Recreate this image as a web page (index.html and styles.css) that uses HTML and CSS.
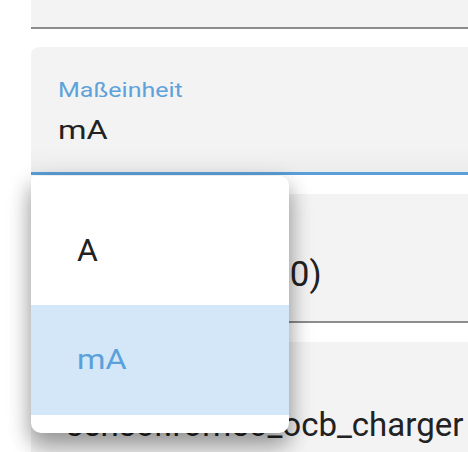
FILE: index.html
```html
<!DOCTYPE html>
<html lang="de">
<head>
<meta charset="utf-8">
<title>Maßeinheit</title>
<link rel="stylesheet" href="styles.css">
</head>
<body>
<div class="page">
  <div class="field field-top"></div>

  <div class="select-wrap">
    <div class="field field-focused">
      <div class="label"><span class="wide">Maßeinheit</span></div>
      <div class="value value-sel"><span class="wider">mA</span></div>
    </div>
    <ul class="menu">
      <li class="item">A</li>
      <li class="item item-selected"><span class="wide-item">mA</span></li>
    </ul>
  </div>

  <div class="field field-plain">
    <div class="value value-big">Standard (1.000)</div>
  </div>

  <div class="field field-plain field-last">
    <div class="value value-entity">sensor.romeo_ocb_charger</div>
  </div>
</div>
</body>
</html>
```

FILE: styles.css
```css
* { box-sizing: border-box; }

html, body {
  margin: 0;
  padding: 0;
  background: #ffffff;
  overflow: hidden;
}

body {
  font-family: Roboto, "Noto Sans", "Liberation Sans", sans-serif;
  color: #212121;
  width: 468px;
  height: 452px;
}

.page {
  width: 468px;
  padding-left: 31px;
  display: flex;
  flex-direction: column;
}

.field {
  background: #f3f3f3;
  padding-left: 27px;
  overflow: hidden;
  white-space: nowrap;
}

.field-top {
  height: 29px;
  border-bottom: 2px solid #8c8c8c;
}

.select-wrap {
  position: relative;
  margin-top: 18px;
}

.field-focused {
  height: 128px;
  border-radius: 8px 0 0 0;
  border-bottom: 3px solid #5b9fd8;
  padding-top: 31px;
  background: linear-gradient(#f3f3f3 80%, #ececec);
}

.label {
  font-size: 20px;
  line-height: 24px;
  color: #5da2db;
}

.wide, .wider, .wide-item {
  display: inline-block;
  transform-origin: 0 50%;
}
.wide { transform: scaleX(1.25); }
.wider { transform: scaleX(1.3); }
.wide-item { transform: scaleX(1.2); }

.value-sel {
  margin-top: 14px;
  font-size: 25px;
  line-height: 30px;
  color: #222222;
}

.field-plain {
  margin-top: 19px;
  height: 129px;
  border-radius: 8px 0 0 0;
  border-bottom: 2px solid #8c8c8c;
  padding-top: 61px;
}

.field-last {
  height: 110px;
  border-bottom: none;
  padding-top: 64px;
}

.value-big {
  font-size: 35px;
  line-height: 40px;
  letter-spacing: 0.15px;
  color: #222222;
}

.value-entity {
  margin-left: 8px;
  font-size: 33px;
  line-height: 38px;
  color: #222222;
}

.menu {
  position: absolute;
  top: 100%;
  left: 0;
  margin: 1px 0 0 0;
  width: 258px;
  height: 257px;
  padding: 19px 0 18px 0;
  list-style: none;
  background: #ffffff;
  border-radius: 4px 9px 10px 10px;
  box-shadow: 0 10px 20px rgba(0,0,0,0.22), 0 6px 28px rgba(0,0,0,0.12), 0 16px 24px rgba(0,0,0,0.14);
  z-index: 2;
}

.item {
  height: 110px;
  display: flex;
  align-items: center;
  padding-left: 46px;
  font-size: 32px;
  color: #222222;
}

.item-selected {
  background: #d3e7f8;
  color: #5aa0da;
  font-size: 27px;
}
```
